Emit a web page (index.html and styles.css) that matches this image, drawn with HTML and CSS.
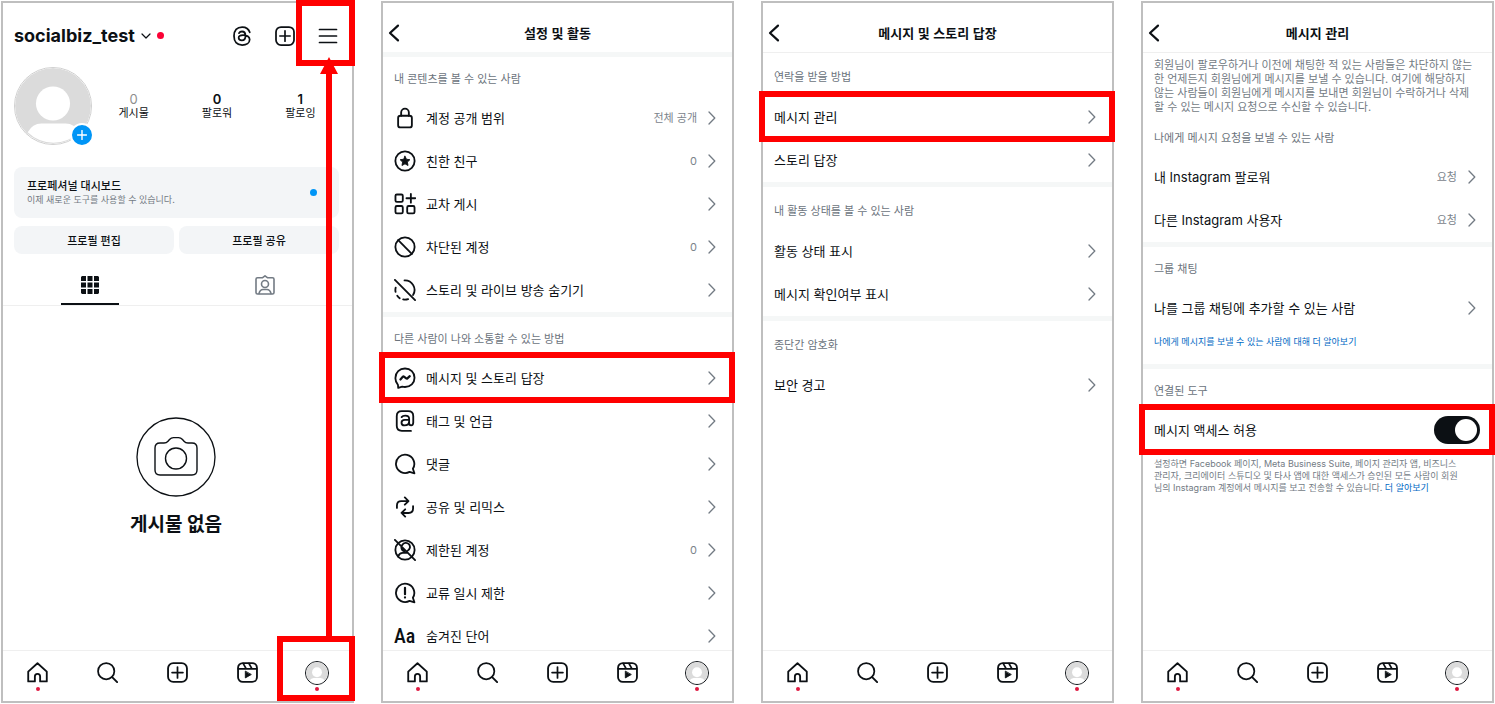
FILE: index.html
```html
<!DOCTYPE html>
<html lang="ko">

<head>
    <meta charset="UTF-8">
    <meta name="viewport" content="width=device-width, initial-scale=1.0">
    <title>메시지 액세스 허용 안내</title>
    <link rel="stylesheet" href="styles.css">
</head>

<body>
<!-- 아이콘 모음 -->
<svg class="icon-defs" aria-hidden="true">
    <symbol id="i-back" viewBox="0 0 12 18"><path d="M10 1.6 2 9l8 7.4" stroke-width="2.2"/></symbol>
    <symbol id="i-next" viewBox="0 0 8 14"><path d="M1 1l5.8 6L1 13" stroke-width="1.3"/></symbol>
    <symbol id="i-home" viewBox="0 0 24 24"><path d="M9 22.2v-5.6a3 3 0 0 1 6 0v5.6h7.6V11L12 1.4 1.4 11v11.2z" stroke-width="2.1"/></symbol>
    <symbol id="i-search" viewBox="0 0 24 24"><circle cx="10.5" cy="10.5" r="9.3" stroke-width="2"/><path d="M17.3 17.3L23 23" stroke-width="2.2"/></symbol>
    <symbol id="i-add" viewBox="0 0 24 24"><rect x="1.2" y="1.2" width="21.6" height="21.6" rx="6" stroke-width="2.1"/><path d="M12 5.8v12.4M5.8 12h12.4" stroke-width="2"/></symbol>
    <symbol id="i-reels" viewBox="0 0 24 24"><rect x="1.2" y="1.2" width="21.6" height="21.6" rx="5.5" stroke-width="2.1"/><path d="M1.6 7.8h20.8M7 1.6l3.4 6M13.6 1.6l3.4 6" stroke-width="2"/><path d="M9.5 10.8v7.4l6.5-3.7z" fill="currentColor" stroke-width="1"/></symbol>
    <symbol id="i-avatar" viewBox="0 0 78 78"><circle cx="39" cy="39" r="39" fill="#dbdbdb" stroke="none"/><circle cx="39" cy="36.5" r="17.5" fill="#fff" stroke="none"/><path d="M13 66q5-9 14-9h25q9 0 14 9A38 38 0 0 1 13 66z" fill="#fff" stroke="none"/></symbol>
    <symbol id="i-threads" viewBox="0 0 24 24"><path d="M21.3 7.6C20 3.3 16.8 1.2 12.2 1.2 6 1.2 2.4 5.4 2.4 12S6 22.8 12.2 22.8c5.2 0 9-2.7 9-6.6 0-3.5-3.3-5.4-8-5.4-3.4 0-5.2 1.3-5.2 3.3 0 1.9 1.6 3.1 3.8 3.1 3 0 4.4-2 4.4-5.2 0-3.5-1.4-5.4-4.2-5.4-1.7 0-2.9.7-3.6 2" stroke-width="2.1"/></symbol>
    <symbol id="i-menu" viewBox="0 0 20 20"><path d="M1.5 3.5h17M1.5 10h17M1.5 16.5h17" stroke-width="1.7"/></symbol>
    <symbol id="i-down" viewBox="0 0 10 6"><path d="M1 1l4 4 4-4" stroke-width="1.2"/></symbol>
    <symbol id="i-grid" viewBox="0 0 18 18"><path fill="currentColor" stroke="none" d="M1 0h4v5H0V1zM6.5 0h5v5h-5zM13 0h4l1 1v4h-5zM0 6.5h5v5H0zM6.5 6.5h5v5h-5zM13 6.5h5v5h-5zM0 13h5v5H1l-1-1zM6.5 13h5v5h-5zM13 13h5v4l-1 1h-4z"/></symbol>
    <symbol id="i-tagged" viewBox="0 0 20 20"><path d="M2.5 2.8h4.8L10 .8l2.7 2h4.8q1.5 0 1.5 1.5v13.2q0 1.5-1.5 1.5h-15Q1 19 1 17.5V4.3q0-1.5 1.5-1.5z" stroke-width="1.6"/><circle cx="10" cy="9" r="3.5" stroke-width="1.6"/><path d="M4 18.5q1-4 4-4h4q3 0 4 4" stroke-width="1.6"/></symbol>
    <symbol id="i-camera" viewBox="0 0 80 80"><circle cx="40" cy="40" r="39" stroke-width="1.3"/><path d="M24 26h4q2.5 0 4-1.8l1.5-1.7q1.7-1.9 4-1.9h5q2.3 0 4 1.9l1.5 1.7q1.5 1.8 4 1.8h4q5 0 5 5v22q0 5-5 5H24q-5 0-5-5V31q0-5 5-5z" stroke-width="1.4"/><circle cx="40" cy="41.5" r="10.5" stroke-width="1.4"/></symbol>
    <symbol id="i-lock" viewBox="0 0 24 24"><rect x="4.5" y="9.5" width="15" height="12.8" rx="2.5"/><path d="M7.8 9.5V6a4.2 4.2 0 0 1 8.4 0v3.5"/></symbol>
    <symbol id="i-star" viewBox="0 0 24 24"><circle cx="12" cy="12" r="10.5"/><path fill="currentColor" stroke-width="1" d="M12 6.8l1.6 3.3 3.7.5-2.7 2.6.7 3.7-3.3-1.8-3.3 1.8.7-3.7-2.7-2.6 3.7-.5z"/></symbol>
    <symbol id="i-cross" viewBox="0 0 24 24"><rect x="1.6" y="1.6" width="8" height="8" rx="1.5"/><rect x="1.6" y="14.2" width="8" height="8" rx="1.5"/><rect x="14.4" y="14.2" width="8" height="8" rx="1.5"/><path d="M18.4 1v9.5M13.6 5.7h9.6"/></symbol>
    <symbol id="i-block" viewBox="0 0 24 24"><circle cx="12" cy="12" r="10.5"/><path d="M4.6 4.6l14.8 14.8"/></symbol>
    <symbol id="i-hide" viewBox="0 0 24 24"><path d="M1 1l22 22M11.5 1.5a10.5 10.5 0 0 1 9.3 16M1.8 9.5a10.5 10.5 0 0 0-.1 4.6M3.6 18.3a10.5 10.5 0 0 0 2.6 2.6M10 22.3a10.5 10.5 0 0 0 5.4-.4"/></symbol>
    <symbol id="i-messenger" viewBox="0 0 24 24"><path d="M12 1.6c6 0 10.4 4.3 10.4 10.1S18 21.8 12 21.8q-1.6 0-3-.4L4.6 22.8l-.3-3.4a10 10 0 0 1-2.7-7.7C1.6 5.9 6 1.6 12 1.6z"/><path d="M7 13.6l2.6-3q.6-.6 1.3-.1l2.4 1.9q.7.5 1.3 0l2.6-2.4" stroke-width="2.4"/></symbol>
    <symbol id="i-at" viewBox="0 0 24 24"><path d="M18.5 22.8H8.5q-5.5 0-5.5-5.5V6.7q0-5.5 5.5-5.5h7q5.5 0 5.5 5.5v7q0 3-2.3 3-2.2 0-2.2-2.6V9.500q0-3.300-4.200-3.300-2.800 0-4 1.500M16.400 10.800h-4.600q-3.600 0-3.600 3t3.200 3q5 0 5-4"/></symbol>
    <symbol id="i-comment" viewBox="0 0 24 24"><path d="M20.6 17.2A10 10 0 1 0 17 20.6l5.3 1.5z"/></symbol>
    <symbol id="i-remix" viewBox="0 0 24 24"><path d="M3.2 13v-2.700q0-4.800 4.800-4.800h7.500M11.800 1.500l4 4-4 4M20.800 11v2.700q0 4.800-4.800 4.800H8.500M12.200 14.500l-4 4 4 4"/></symbol>
    <symbol id="i-restrict" viewBox="0 0 24 24"><circle cx="12" cy="12" r="10.5"/><path d="M1 1l22 22M9 6.5a4.500 4.500 0 1 1 5.800 6.300M4.500 19q1.500-3.800 5-3.800h4.500M8 9q.2 3.500 3.300 4.500"/></symbol>
    <symbol id="i-limit" viewBox="0 0 24 24"><path d="M20.6 17.2A10 10 0 1 0 17 20.6l5.3 1.5z"/><path d="M12 6.3v7M12 16.7v.3" stroke-width="2.4"/></symbol>
    <symbol id="i-plus" viewBox="0 0 10 10"><path d="M5 .5v9M.5 5h9" stroke-width="1.4"/></symbol>
</svg>

<main class="steps">
    <!-- 1. 프로필 -->
    <section class="phone">
        <header class="profile-bar">
            <button class="account">socialbiz_test <svg class="down"><use href="#i-down"/></svg><span class="new-dot"></span></button>
            <button class="bar-icon" aria-label="Threads"><svg><use href="#i-threads"/></svg></button>
            <button class="bar-icon" aria-label="만들기"><svg><use href="#i-add"/></svg></button>
            <button class="bar-icon" aria-label="메뉴"><svg><use href="#i-menu"/></svg></button>
        </header>
        <div class="profile">
            <div class="summary">
                <div class="photo">
                    <svg><use href="#i-avatar"/></svg>
                    <button class="photo-add" aria-label="스토리 추가"><svg><use href="#i-plus"/></svg></button>
                </div>
                <div class="stats">
                    <a href="#"><b class="muted">0</b>게시물</a>
                    <a href="#"><b>0</b>팔로워</a>
                    <a href="#"><b>1</b>팔로잉</a>
                </div>
            </div>
            <a class="dashboard" href="#">
                <span><b>프로페셔널 대시보드</b><small>이제 새로운 도구를 사용할 수 있습니다.</small></span>
                <i class="blue-dot"></i>
            </a>
            <div class="actions">
                <button>프로필 편집</button>
                <button>프로필 공유</button>
            </div>
        </div>
        <div class="tabs">
            <button class="tab active" aria-label="게시물"><svg><use href="#i-grid"/></svg></button>
            <button class="tab" aria-label="태그됨"><svg><use href="#i-tagged"/></svg></button>
        </div>
        <div class="empty">
            <svg><use href="#i-camera"/></svg>
            <h2>게시물 없음</h2>
        </div>
        <nav class="nav">
            <a class="dot" href="#" aria-label="홈"><svg><use href="#i-home"/></svg></a>
            <a href="#" aria-label="검색"><svg><use href="#i-search"/></svg></a>
            <a href="#" aria-label="만들기"><svg><use href="#i-add"/></svg></a>
            <a href="#" aria-label="릴스"><svg><use href="#i-reels"/></svg></a>
            <a class="dot" href="#" aria-label="프로필"><svg class="me"><use href="#i-avatar"/></svg></a>
        </nav>
        <div class="mark mark-menu"></div>
        <div class="mark mark-profile"></div>
        <div class="arrow"></div>
    </section>

    <!-- 2. 설정 및 활동 -->
    <section class="phone">
        <header class="title-bar">
            <button class="back" aria-label="뒤로"><svg><use href="#i-back"/></svg></button>
            <h1>설정 및 활동</h1>
        </header>
        <div class="list">
            <div class="group band">
                <h2>내 콘텐츠를 볼 수 있는 사람</h2>
                <a class="row" href="#"><svg class="icon"><use href="#i-lock"/></svg>계정 공개 범위<span class="value">전체 공개</span></a>
                <a class="row" href="#"><svg class="icon"><use href="#i-star"/></svg>친한 친구<span class="value">0</span></a>
                <a class="row" href="#"><svg class="icon"><use href="#i-cross"/></svg>교차 게시<span class="value"></span></a>
                <a class="row" href="#"><svg class="icon"><use href="#i-block"/></svg>차단된 계정<span class="value">0</span></a>
                <a class="row" href="#"><svg class="icon"><use href="#i-hide"/></svg>스토리 및 라이브 방송 숨기기<span class="value"></span></a>
            </div>
            <div class="group band">
                <h2>다른 사람이 나와 소통할 수 있는 방법</h2>
                <a class="row marked" href="#"><svg class="icon"><use href="#i-messenger"/></svg>메시지 및 스토리 답장<span class="value"></span></a>
                <a class="row" href="#"><svg class="icon"><use href="#i-at"/></svg>태그 및 언급<span class="value"></span></a>
                <a class="row" href="#"><svg class="icon"><use href="#i-comment"/></svg>댓글<span class="value"></span></a>
                <a class="row" href="#"><svg class="icon"><use href="#i-remix"/></svg>공유 및 리믹스<span class="value"></span></a>
                <a class="row" href="#"><svg class="icon"><use href="#i-restrict"/></svg>제한된 계정<span class="value">0</span></a>
                <a class="row" href="#"><svg class="icon"><use href="#i-limit"/></svg>교류 일시 제한<span class="value"></span></a>
                <a class="row" href="#"><span class="icon letters">Aa</span>숨겨진 단어<span class="value"></span></a>
            </div>
        </div>
        <nav class="nav">
            <a class="dot" href="#" aria-label="홈"><svg><use href="#i-home"/></svg></a>
            <a href="#" aria-label="검색"><svg><use href="#i-search"/></svg></a>
            <a href="#" aria-label="만들기"><svg><use href="#i-add"/></svg></a>
            <a href="#" aria-label="릴스"><svg><use href="#i-reels"/></svg></a>
            <a class="dot" href="#" aria-label="프로필"><svg class="me"><use href="#i-avatar"/></svg></a>
        </nav>
    </section>

    <!-- 3. 메시지 및 스토리 답장 -->
    <section class="phone">
        <header class="title-bar line">
            <button class="back" aria-label="뒤로"><svg><use href="#i-back"/></svg></button>
            <h1>메시지 및 스토리 답장</h1>
        </header>
        <div class="list roomy">
            <div class="group">
                <h2>연락을 받을 방법</h2>
                <a class="row marked" href="#">메시지 관리<span class="value"></span></a>
                <a class="row" href="#">스토리 답장<span class="value"></span></a>
            </div>
            <div class="group band">
                <h2>내 활동 상태를 볼 수 있는 사람</h2>
                <a class="row" href="#">활동 상태 표시<span class="value"></span></a>
                <a class="row" href="#">메시지 확인여부 표시<span class="value"></span></a>
            </div>
            <div class="group band">
                <h2>종단간 암호화</h2>
                <a class="row" href="#">보안 경고<span class="value"></span></a>
            </div>
        </div>
        <nav class="nav">
            <a class="dot" href="#" aria-label="홈"><svg><use href="#i-home"/></svg></a>
            <a href="#" aria-label="검색"><svg><use href="#i-search"/></svg></a>
            <a href="#" aria-label="만들기"><svg><use href="#i-add"/></svg></a>
            <a href="#" aria-label="릴스"><svg><use href="#i-reels"/></svg></a>
            <a class="dot" href="#" aria-label="프로필"><svg class="me"><use href="#i-avatar"/></svg></a>
        </nav>
    </section>

    <!-- 4. 메시지 관리 -->
    <section class="phone">
        <header class="title-bar line">
            <button class="back" aria-label="뒤로"><svg><use href="#i-back"/></svg></button>
            <h1>메시지 관리</h1>
        </header>
        <div class="list">
            <div class="group">
                <p class="intro">회원님이 팔로우하거나 이전에 채팅한 적 있는 사람들은 차단하지 않는<br>한 언제든지 회원님에게 메시지를 보낼 수 있습니다. 여기에 해당하지<br>않는 사람들이 회원님에게 메시지를 보내면 회원님이 수락하거나 삭제<br>할 수 있는 메시지 요청으로 수신할 수 있습니다.</p>
                <h2>나에게 메시지 요청을 보낼 수 있는 사람</h2>
                <a class="row" href="#"><span>내 <span class="latin">Instagram</span> 팔로워</span><span class="value">요청</span></a>
                <a class="row" href="#"><span>다른 <span class="latin">Instagram</span> 사용자</span><span class="value">요청</span></a>
            </div>
            <div class="group band">
                <h2>그룹 채팅</h2>
                <a class="row" href="#">나를 그룹 채팅에 추가할 수 있는 사람<span class="value"></span></a>
                <p class="more"><a href="#">나에게 메시지를 보낼 수 있는 사람에 대해 더 알아보기</a></p>
            </div>
            <div class="group band">
                <h2>연결된 도구</h2>
                <div class="row-switch marked">
                    <label for="access">메시지 액세스 허용</label>
                    <input class="switch" type="checkbox" id="access" checked>
                </div>
                <p class="note">설정하면 Facebook 페이지, Meta Business Suite, 페이지 관리자 앱, 비즈니스<br>관리자, 크리에이터 스튜디오 및 타사 앱에 대한 액세스가 승인된 모든 사람이 회원<br>님의 Instagram 계정에서 메시지를 보고 전송할 수 있습니다. <a href="#">더 알아보기</a></p>
            </div>
        </div>
        <nav class="nav">
            <a class="dot" href="#" aria-label="홈"><svg><use href="#i-home"/></svg></a>
            <a href="#" aria-label="검색"><svg><use href="#i-search"/></svg></a>
            <a href="#" aria-label="만들기"><svg><use href="#i-add"/></svg></a>
            <a href="#" aria-label="릴스"><svg><use href="#i-reels"/></svg></a>
            <a class="dot" href="#" aria-label="프로필"><svg class="me"><use href="#i-avatar"/></svg></a>
        </nav>
    </section>
</main>

<!-- 목록 화살표 -->
<script>
    document.querySelectorAll('.row').forEach(row => {
        row.insertAdjacentHTML('beforeend', '<svg class="next"><use href="#i-next"/></svg>');
    });
</script>
</body>

</html>
```
FILE: styles.css
```css
* {
    box-sizing: border-box;
}

body {
    margin: 0;
    background-color: #fff;
    color: #0c1014;
    font-family: Inter, "Noto Sans CJK KR", sans-serif;
    font-size: 11px;
}

h1, h2, p {
    margin: 0;
}

a {
    color: inherit;
    text-decoration: none;
}

button {
    padding: 0;
    border: 0;
    background: none;
    color: inherit;
    font: inherit;
    cursor: pointer;
}

svg {
    display: block;
    flex: none;
    fill: none;
    stroke: currentColor;
    stroke-linecap: round;
    stroke-linejoin: round;
}

.icon-defs {
    position: absolute;
    width: 0;
    height: 0;
}

/* 화면 네 개 */
.steps {
    display: grid;
    grid-template-columns: repeat(4, 1fr);
    gap: 27px;
    height: 100vh;
    padding: 1px;
}

.phone {
    position: relative;
    display: flex;
    flex-direction: column;
    min-width: 0;
    min-height: 0;
    border: 2px solid #bfbfbf;
    white-space: nowrap;
}

/* 제목 줄 */
.title-bar {
    display: grid;
    grid-template-columns: 24px 1fr 24px;
    align-items: center;
    height: 49px;
    padding: 10px 5px 0;
}

.title-bar.line {
    height: 50px;
    border-bottom: 1px solid #efefef;
}

.title-bar h1 {
    font-family: "Noto Sans CJK KR", sans-serif;
    font-size: 13px;
    font-weight: 700;
    text-align: center;
}

.back svg {
    width: 12px;
    height: 18px;
}

/* 설정 목록 */
.list {
    flex: 1;
    min-height: 0;
    overflow-y: clip;
}

.band {
    border-top: 5px solid #f5f7f7;
}

.group h2 {
    height: 40px;
    padding: 4px 11px 0;
    color: #6b737c;
    font-size: 11px;
    font-weight: 400;
    line-height: 36px;
}

.roomy h2 {
    height: 43px;
    line-height: 40px;
}

.row,
.row-switch {
    position: relative;
    display: flex;
    align-items: center;
    height: 43px;
    padding: 0 16px 1px 11px;
    font-family: "Noto Sans CJK KR", sans-serif;
    font-size: 13px;
    line-height: 18px;
}

.row-switch {
    justify-content: space-between;
    padding-right: 12px;
}

.icon {
    width: 22px;
    height: 22px;
    margin-right: 10px;
    stroke-width: 2;
}

.letters {
    font-family: "Roboto Condensed", Roboto, sans-serif;
    font-size: 20px;
    font-weight: 500;
    line-height: 22px;
}

.latin {
    font-family: Inter, sans-serif;
}

.value {
    margin-left: auto;
    color: #7b838b;
    font-family: Inter, "Noto Sans CJK KR", sans-serif;
    font-size: 11px;
}

.next {
    width: 8px;
    height: 14px;
    margin-left: 11px;
    color: #737b84;
}

.intro {
    padding: 5px 11px 2px;
    color: #737b84;
    line-height: 14px;
}

.more,
.note {
    padding: 6px 11px 16px;
    color: #737b84;
    font-size: 9px;
    line-height: 12px;
}

.more a,
.note a {
    color: #0069c4;
}

.switch {
    appearance: none;
    width: 46px;
    height: 28px;
    margin: 0;
    padding: 3px;
    border-radius: 14px;
    background-color: #a0a6ac;
}

.switch::before {
    content: "";
    display: block;
    width: 22px;
    height: 22px;
    border-radius: 50%;
    background-color: #fff;
}

.switch:checked {
    background-color: #0c1014;
}

.switch:checked::before {
    margin-left: auto;
}

/* 하단 탭 */
.nav {
    display: grid;
    grid-template-columns: repeat(5, 1fr);
    height: 51px;
    margin-top: auto;
    border-top: 1px solid #efefef;
}

.nav a {
    position: relative;
    display: flex;
    justify-content: center;
    align-items: center;
    height: 43px;
}

.nav svg {
    width: 21px;
    height: 21px;
}

.nav .me {
    width: 24px;
    height: 24px;
    border: 1px solid #0c1014;
    border-radius: 50%;
}

.nav .dot::after {
    content: "";
    position: absolute;
    top: 36px;
    width: 4px;
    height: 4px;
    border-radius: 50%;
    background-color: #e0173f;
}

/* 프로필 화면 */
.profile-bar {
    display: flex;
    align-items: center;
    gap: 23px;
    height: 64px;
    padding: 1px 14px 0 11px;
}

.account {
    display: flex;
    align-items: center;
    gap: 6px;
    margin-right: auto;
    font-size: 18px;
    font-weight: 700;
}

.down {
    width: 10px;
    height: 6px;
}

.new-dot,
.blue-dot {
    width: 7px;
    height: 7px;
    border-radius: 50%;
    background-color: #fb0235;
}

.bar-icon svg {
    width: 20px;
    height: 20px;
}

.profile {
    padding: 0 13px 0 11px;
}

.summary {
    display: flex;
    align-items: center;
}

.photo {
    position: relative;
}

.photo > svg {
    width: 78px;
    height: 78px;
    border: 1px solid #d0d0d0;
    border-radius: 50%;
}

.photo-add {
    position: absolute;
    right: -2px;
    bottom: -2px;
    display: flex;
    justify-content: center;
    align-items: center;
    width: 24px;
    height: 24px;
    border: 2px solid #fff;
    border-radius: 50%;
    background-color: #0095f6;
    color: #fff;
}

.photo-add svg {
    width: 10px;
    height: 10px;
}

.stats {
    flex: 1;
    display: grid;
    grid-template-columns: repeat(3, 1fr);
    margin-right: -3px;
    text-align: center;
    line-height: 14px;
}

.stats b {
    display: block;
    font-size: 13px;
    font-weight: 600;
}

.stats .muted {
    color: #8e8e8e;
    font-weight: 400;
}

.dashboard {
    display: flex;
    justify-content: space-between;
    align-items: center;
    height: 51px;
    margin: 22px 0 8px;
    padding: 0 22px 0 13px;
    border-radius: 8px;
    background-color: #f3f5f7;
    line-height: 13px;
}

.dashboard b,
.actions button {
    font-weight: 500;
}

.dashboard small {
    display: block;
    color: #737b84;
    font-size: 9px;
}

.blue-dot {
    background-color: #0095f6;
}

.actions {
    display: grid;
    grid-template-columns: 1fr 1fr;
    gap: 5px;
}

.actions button {
    height: 28px;
    border-radius: 8px;
    background-color: #f3f5f7;
}

.tabs {
    display: grid;
    grid-template-columns: 1fr 1fr;
    justify-items: center;
    height: 52px;
    padding-top: 12px;
    border-bottom: 1px solid #efefef;
}

.tab {
    display: flex;
    justify-content: center;
    align-items: center;
    width: 58px;
    border-bottom: 2px solid transparent;
    color: #737b84;
}

.tab.active {
    border-color: #0c1014;
    color: #0c1014;
}

.tab svg {
    width: 20px;
    height: 20px;
}

.tab.active svg {
    width: 18px;
    height: 18px;
}

.empty {
    display: flex;
    flex-direction: column;
    align-items: center;
    gap: 14px;
    padding: 111px 3px 0 0;
}

.empty svg {
    width: 80px;
    height: 80px;
}

.empty h2 {
    font-size: 19px;
    font-weight: 700;
    line-height: 28px;
}

/* 빨간색 강조 표시 */
.marked::after,
.mark {
    content: "";
    position: absolute;
    border: 6px solid #f00;
    pointer-events: none;
}

.marked::after {
    inset: -5px -3px -3px -4px;
}

.mark-menu {
    top: -3px;
    right: -3px;
    width: 59px;
    height: 66px;
}

.mark-profile {
    right: -3px;
    bottom: 0;
    width: 78px;
    height: 65px;
}

.arrow {
    position: absolute;
    top: 54px;
    right: 14px;
    bottom: 64px;
    width: 18px;
    background-color: #f00;
    clip-path: polygon(50% 0, 100% 17px, 12px 17px, 12px 100%, 6px 100%, 6px 17px, 0 17px);
}
```
